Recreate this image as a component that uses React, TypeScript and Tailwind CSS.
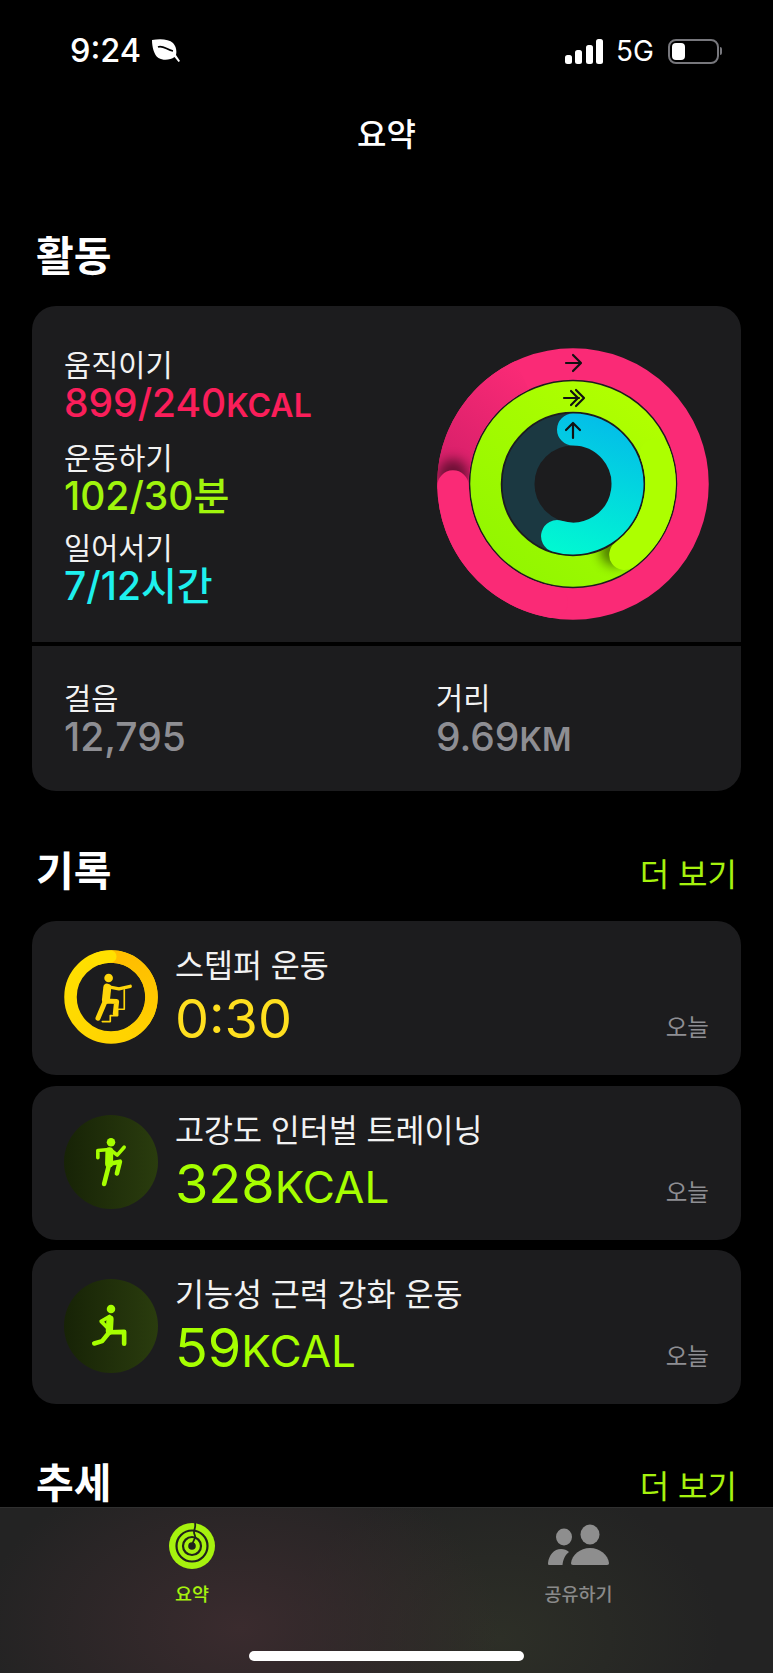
import React from 'react';

// angle in degrees, clockwise from 12 o'clock
const polar = (c: number, r: number, a: number) => {
  const rad = ((a - 90) * Math.PI) / 180;
  return [c + r * Math.cos(rad), c + r * Math.sin(rad)];
};

const arc = (c: number, r: number, from: number, to: number) => {
  const [x1, y1] = polar(c, r, from);
  const [x2, y2] = polar(c, r, to);
  const large = to - from > 180 ? 1 : 0;
  return `M${x1} ${y1}A${r} ${r} 0 ${large} 1 ${x2} ${y2}`;
};

function Rings() {
  const c = 138;
  return (
    <svg width="276" height="276" viewBox="0 0 276 276" fill="none" className="shrink-0">
      <defs>
        <linearGradient id="outerShade" gradientUnits="userSpaceOnUse" x1="18" y1="120" x2="90" y2="25">
          <stop offset="0" stopColor="#d8206a" />
          <stop offset="1" stopColor="#fa2a76" />
        </linearGradient>
        <linearGradient id="midGrad" gradientUnits="userSpaceOnUse" x1="60" y1="240" x2="200" y2="60">
          <stop offset="0" stopColor="#8ff500" />
          <stop offset="1" stopColor="#b0ff00" />
        </linearGradient>
        <linearGradient id="innerGrad" gradientUnits="userSpaceOnUse" x1="150" y1="70" x2="100" y2="215">
          <stop offset="0" stopColor="#03bfe8" />
          <stop offset="1" stopColor="#00ffcf" />
        </linearGradient>
        <filter id="capShadow" x="-60%" y="-60%" width="220%" height="220%">
          <feGaussianBlur stdDeviation="6" />
        </filter>
        <clipPath id="outerBand">
          <path clipRule="evenodd" d="M138 2a136 136 0 1 0 .01 0ZM138 33.500a104.500 104.500 0 1 1-.01 0Z" />
        </clipPath>
        <clipPath id="midBand">
          <path clipRule="evenodd" d="M138 35a103 103 0 1 0 .01 0ZM138 66a72 72 0 1 1-.01 0Z" />
        </clipPath>
      </defs>

      <circle cx={c} cy={c} r="120" stroke="#fa2a76" strokeWidth="31.500" />
      <path d={arc(c, 120, 268, 335)} stroke="url(#outerShade)" strokeWidth="31.500" />
      <g clipPath="url(#outerBand)">
        <circle cx="18" cy="128" r="15" fill="#000" opacity="0.5" filter="url(#capShadow)" />
      </g>
      <path d={arc(c, 120, 190, 269)} stroke="#fa2a76" strokeWidth="31.500" strokeLinecap="round" />

      <circle cx={c} cy={c} r="87.500" stroke="url(#midGrad)" strokeWidth="30.500" />
      <g clipPath="url(#midBand)">
        <circle cx="180" cy="205" r="15" fill="#000" opacity="0.5" filter="url(#capShadow)" />
      </g>
      <path d={arc(c, 87.5, 70, 144)} stroke="#adff00" strokeWidth="30.500" strokeLinecap="round" />

      <circle cx={c} cy={c} r="54.500" stroke="#1b3841" strokeWidth="32" />
      <path d={arc(c, 54.5, 0, 197)} stroke="url(#innerGrad)" strokeWidth="32" strokeLinecap="round" />

      <g stroke="#111" strokeWidth="2.200" strokeLinecap="round" strokeLinejoin="round">
        <path d="M131 17h14M138 9l8 8-8 8" />
        <path d="M129 52h15M136 45l7 7-7 7M141 44l8 8-8 8" />
        <path d="M138 92V77M131 84l7-7 7 7" />
      </g>
    </svg>
  );
}

function StepperIcon() {
  return (
    <svg width="94" height="94" viewBox="0 0 94 94" fill="none" className="shrink-0">
      <defs>
        <linearGradient id="stepGrad" x1="0" y1="0" x2="1" y2="1">
          <stop offset="0" stopColor="#ffe000" />
          <stop offset="1" stopColor="#ffd000" />
        </linearGradient>
        <linearGradient id="stepTail" gradientUnits="userSpaceOnUse" x1="60" y1="5" x2="70" y2="85">
          <stop offset="0" stopColor="#ffbd00" />
          <stop offset="1" stopColor="#ffd000" />
        </linearGradient>
      </defs>
      <circle cx="47" cy="47" r="40.500" stroke="url(#stepGrad)" strokeWidth="12.500" />
      <path d={arc(47, 40.5, 0, 150)} stroke="url(#stepTail)" strokeWidth="12.500" />
      <path d={arc(47, 40.5, 340, 359)} stroke="#ffe000" strokeWidth="12.500" strokeLinecap="round" />
      <g transform="translate(-4 -4) scale(0.333)" stroke="#ffd60a" strokeLinecap="round" strokeLinejoin="round">
        <circle cx="146" cy="96" r="13" fill="#ffd60a" stroke="none" />
        <path d="M142 125l-4 36" strokeWidth="24" />
        <path d="M142 122l35 7 34-8" strokeWidth="10" />
        <path d="M136 165l34 2-4 36M136 165l-22 52" strokeWidth="15" />
        <path d="M127 227h24v-18h22v-19h20v-58" strokeWidth="5" />
      </g>
    </svg>
  );
}

function RunIcon() {
  return (
    <svg width="94" height="94" viewBox="12 10 286 286" fill="none" className="shrink-0">
      <defs>
        <linearGradient id="runBg" x1="0" y1="0" x2="1" y2="0">
          <stop offset="0" stopColor="#172306" />
          <stop offset="1" stopColor="#2a3c0e" />
        </linearGradient>
      </defs>
      <circle cx="155" cy="153" r="143" fill="url(#runBg)" />
      <circle cx="155" cy="93" r="13" fill="#a6ff00" />
      <g stroke="#a6ff00" strokeLinecap="round" strokeLinejoin="round">
        <path d="M150 120l-1 38" strokeWidth="24" />
        <path d="M150 115l-35 3 0 22M156 118l18 14 21-24" strokeWidth="11" />
        <path d="M150 158l32-6-9 36" strokeWidth="14" />
        <path d="M148 165l-14 55" strokeWidth="14" />
      </g>
    </svg>
  );
}

function LungeIcon() {
  return (
    <svg width="94" height="94" viewBox="12 10 286 286" fill="none" className="shrink-0">
      <defs>
        <linearGradient id="lungeBg" x1="0" y1="0" x2="1" y2="0">
          <stop offset="0" stopColor="#172306" />
          <stop offset="1" stopColor="#2a3c0e" />
        </linearGradient>
      </defs>
      <circle cx="155" cy="153" r="143" fill="url(#lungeBg)" />
      <circle cx="155" cy="101" r="13" fill="#a6ff00" />
      <g stroke="#a6ff00" strokeLinecap="round" strokeLinejoin="round">
        <path d="M152 132l-2 36" strokeWidth="22" />
        <path d="M150 124l-25 15 22 22" strokeWidth="11" />
        <path d="M150 172l45-1 0 36" strokeWidth="14" />
        <path d="M150 172l-22 27-24 7" strokeWidth="14" />
      </g>
    </svg>
  );
}

function Stat({ label, value, unit, color }: { label: string; value: string; unit: React.ReactNode; color: string }) {
  return (
    <div className="flex flex-col">
      <span className="text-[29.5px] leading-[38px] text-[#f2f2f2]">{label}</span>
      <span className={`text-[39px] leading-[38px] font-medium ${color}`}>
        {value}
        {unit}
      </span>
    </div>
  );
}

function RecordCard({ icon, title, value, unit, color }: { icon: React.ReactNode; title: string; value: string; unit?: string; color: string }) {
  return (
    <div className="h-[154px] rounded-[24px] bg-[#1c1c1e] flex items-start pl-8 pr-8">
      <div className="mt-[29px]">{icon}</div>
      <div className="ml-[17px] flex-1 flex flex-col pt-[27px]">
        <span className="text-[31.5px] leading-[36px] text-[#f2f2f2]">{title}</span>
        <span className={`text-[54px] leading-[60px] mt-[5px] ${color}`}>
          {value}
          {unit && <span className="text-[44px]">{unit}</span>}
        </span>
      </div>
      <span className="mt-[92px] text-[23.5px] leading-[30px] text-[#8e8e93]">오늘</span>
    </div>
  );
}

function SectionHead({ title, more }: { title: string; more?: boolean }) {
  return (
    <div className="flex items-center justify-between h-[44px] pl-9 pr-9">
      <h2 className="text-[41px] leading-[40px] font-bold text-white">{title}</h2>
      {more && <span className="text-[32px] leading-[36px] mt-[8px] text-[#a6f20e]">더 보기</span>}
    </div>
  );
}

export default function App() {
  return (
    <div className="w-[773px] h-[1673px] bg-black text-white flex flex-col overflow-hidden font-['Inter','Noto_Sans_CJK_KR',sans-serif]">
      <div className="flex-1 overflow-hidden">
        {/* status bar */}
        <div className="h-[103px] flex items-start justify-between pl-[70px] pr-[51px] pt-[32px]">
          <div className="flex items-center gap-[10px]">
            <span className="text-[32.5px] leading-[38px] font-medium">9:24</span>
            <svg width="30" height="24" viewBox="0 0 30 24" fill="#fff">
              <path d="M1 1c8-1.500 17-1 21 3 3 3 4 8 3 12l4 6-1.500 1-4-5c-4 3-11 4-16 1C3 16 1 8 1 1Z" />
              <path d="M7 8c5-2 9 3 15 4" stroke="#000" strokeWidth="1.600" fill="none" />
            </svg>
          </div>
          <div className="flex items-center">
            <svg width="38" height="25" viewBox="0 0 38 25" fill="#fff">
              <rect x="0" y="16" width="7" height="9" rx="2.500" />
              <rect x="10" y="11" width="7" height="14" rx="2.500" />
              <rect x="21" y="6" width="7" height="19" rx="2.500" />
              <rect x="31" y="0" width="7" height="25" rx="2.500" />
            </svg>
            <span className="ml-[13px] text-[28px] leading-[38px]">5G</span>
            <div className="ml-[14px] w-[51px] h-[25px] rounded-[8px] border-2 border-[#77777c] p-[2px]">
              <div className="w-[13px] h-full rounded-[4px] bg-white" />
            </div>
            <div className="ml-px w-[2px] h-[8px] rounded-r bg-[#77777c]" />
          </div>
        </div>

        {/* nav title */}
        <div className="h-[50px] pt-[14px] flex items-center justify-center text-[32px] leading-[36px] font-medium">요약</div>

        <div className="h-[81px]" />
        <SectionHead title="활동" />

        <div className="mx-8 mt-[28px] rounded-[24px] bg-[#1c1c1e] overflow-hidden">
          <div className="h-[336px] flex justify-between pl-8 pr-[30px] pt-[40px]">
            <div className="flex flex-col gap-[14px]">
              <Stat label="움직이기" value="899/240" unit={<span className="text-[32px] font-semibold">KCAL</span>} color="text-[#fa1e5a]" />
              <Stat label="운동하기" value="102/30" unit="분" color="text-[#a0f50c]" />
              <Stat label="일어서기" value="7/12" unit="시간" color="text-[#1ef0ee]" />
            </div>
            <Rings />
          </div>
          <div className="h-[4px] bg-black" />
          <div className="h-[145px] flex pl-8 pt-[33px]">
            <div className="w-[372px] flex flex-col">
              <span className="text-[29.5px] leading-[38px] text-[#f2f2f2]">걸음</span>
              <span className="text-[39px] leading-[39px] font-medium text-[#8e8e93]">12,795</span>
            </div>
            <div className="flex flex-col">
              <span className="text-[29.5px] leading-[38px] text-[#f2f2f2]">거리</span>
              <span className="text-[39px] leading-[39px] font-medium text-[#8e8e93]">
                9.69<span className="text-[32px] font-semibold">KM</span>
              </span>
            </div>
          </div>
        </div>

        <div className="mt-[58px]">
          <SectionHead title="기록" more />
        </div>

        <div className="mx-8 mt-[28px] flex flex-col gap-[10.5px]">
          <RecordCard icon={<StepperIcon />} title="스텝퍼 운동" value="0:30" color="text-[#ffdf1f]" />
          <RecordCard icon={<RunIcon />} title="고강도 인터벌 트레이닝" value="328" unit="KCAL" color="text-[#a6ff00]" />
          <RecordCard icon={<LungeIcon />} title="기능성 근력 강화 운동" value="59" unit="KCAL" color="text-[#a6ff00]" />
        </div>

        <div className="mt-[57px]">
          <SectionHead title="추세" more />
        </div>
      </div>

      {/* tab bar */}
      <div className="h-[166px] shrink-0 border-t border-[#303030] bg-[radial-gradient(ellipse_260px_170px_at_240px_120px,#3a2b2e,transparent),radial-gradient(ellipse_220px_160px_at_500px_130px,#2d2f27,transparent)] bg-[#232323] flex flex-col">
        <div className="flex pt-[14px]">
          <div className="w-[384px] flex flex-col items-center">
            <svg width="46" height="48" viewBox="0 0 46 48">
              <circle cx="23" cy="24" r="23" fill="#a6f20e" />
              <circle cx="23" cy="24" r="15.500" fill="none" stroke="#20221c" strokeWidth="2.200" />
              <circle cx="23" cy="24" r="9" fill="none" stroke="#20221c" strokeWidth="2.200" />
              <circle cx="23" cy="24" r="3.800" fill="#20221c" />
              <path d="M26 1c1 5-1 6-1 9s2 4 1 6-2 3-3 8" fill="none" stroke="#20221c" strokeWidth="1.800" />
            </svg>
            <span className="mt-[13px] text-[18.5px] leading-[22px] font-medium text-[#a6f20e]">요약</span>
          </div>
          <div className="flex-1 flex flex-col items-center">
            <svg width="62" height="42" viewBox="0 0 62 42" fill="#8e8e8e" className="mt-[2px]">
              <ellipse cx="16" cy="13" rx="8" ry="8.500" />
              <ellipse cx="42" cy="10.500" rx="9.500" ry="10" />
              <path d="M1 41c-1 0-1-1-1-2 1-8 6-14 13-14 3 0 6 1 8 3-4 3-6 8-6.500 13Z" />
              <path d="M25 41c-1.500 0-2-1-2-2 1-8 9-15 19-15s18 7 19 15c0 1-.5 2-2 2Z" />
            </svg>
            <span className="mt-[17px] text-[18.5px] leading-[22px] font-medium text-[#8a8a8a]">공유하기</span>
          </div>
        </div>
        <div className="mt-[46px] self-center w-[275px] h-[10px] rounded-full bg-white" />
      </div>
    </div>
  );
}
